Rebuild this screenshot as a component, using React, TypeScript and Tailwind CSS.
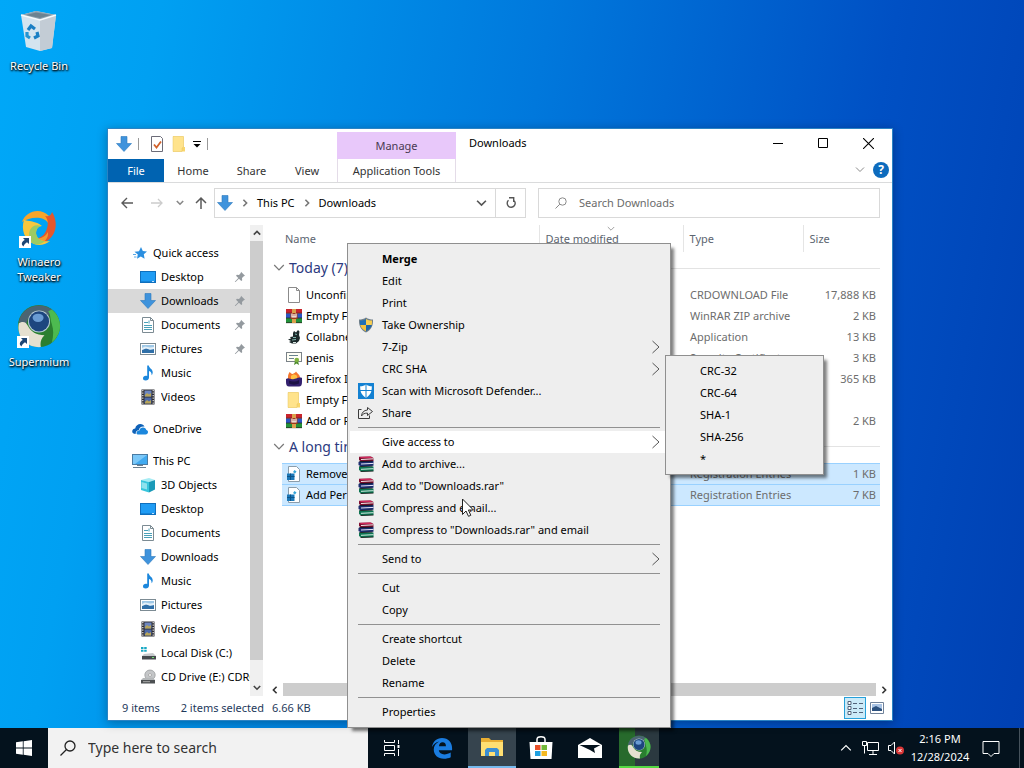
import type { ReactNode } from 'react';

type P = { className?: string };

const DownArrow = ({ className = 'size-4' }: P) => (
  <svg viewBox="0 0 16 16" className={className} aria-hidden="true">
    <path d="M5 .5h6v7h4.500L8 15.500.5 7.500H5z" fill="#3f93dc" stroke="#2c79bd" strokeWidth=".6" />
  </svg>
);
const Star = () => (
  <svg viewBox="0 0 16 16" className="size-4" aria-hidden="true">
    <path d="M9 2l1.800 4 4.200.5-3.200 2.800.8 4.500L8.800 11.500 5 13.800l.8-4.300L2.500 6.700 7 6.200z" fill="#2b8fe0" />
    <path d="M1 9.500h3M2 12h2.500" stroke="#58a9e8" />
  </svg>
);
const Monitor = () => (
  <svg viewBox="0 0 16 16" className="size-4" aria-hidden="true">
    <rect x=".5" y="2.500" width="15" height="11" fill="#1f9cf4" stroke="#0f6fbd" />
    <path d="M1 12.500h14" stroke="#1583d6" /><path d="M12 12.500h2" stroke="#bfe3ff" />
  </svg>
);
const Doc = () => (
  <svg viewBox="0 0 16 16" className="size-4" aria-hidden="true">
    <path d="M2.500.5h8l3 3v12h-11z" fill="#fff" stroke="#7c8b93" />
    <path d="M4 5.500h4M9 3.500v3M4 8.500h8M4 10.500h8M4 12.500h8" stroke="#4aa0b8" />
    <path d="M10.500.5v3h3" fill="none" stroke="#7c8b93" />
  </svg>
);
const Picture = () => (
  <svg viewBox="0 0 16 16" className="size-4" aria-hidden="true">
    <rect x=".5" y="2.500" width="15" height="11" fill="#fff" stroke="#7c8b93" />
    <path d="M2 4h12v8H2z" fill="#9fc8e6" /><path d="M2 9l4-2 4 2 4-1v4H2z" fill="#2f6fa8" />
    <path d="M2 7l3-1.500 5 1 4-.5v2l-4 .5-4-1L2 9z" fill="#e4f0f8" />
  </svg>
);
const Note = () => (
  <svg viewBox="0 0 16 16" className="size-4" aria-hidden="true">
    <path d="M7.200.5h1.600c.4 2.800 3.700 3.400 3.900 6.500.1 1.400-.5 2.600-1.100 3.300.2-2.300-.8-3.700-2.600-4.300v6.500c0 1.800-1.500 3-3.300 3S3 14.500 3 13.200s1.300-2.400 2.800-2.400c.5 0 1 .1 1.400.3z" fill="#1c87dc" />
  </svg>
);
const Film = () => (
  <svg viewBox="0 0 16 16" className="size-4" aria-hidden="true">
    <path d="M1.500.5h13v15h-13z" fill="#2d2d33" />
    <path d="M2.800 1v14M13.200 1v14" stroke="#e8e8e8" strokeWidth="1.200" strokeDasharray="1.300 1.200" />
    <path d="M4.500 1.500h7v6h-7z" fill="#6d86c0" /><path d="M4.500 8.500h7v6h-7z" fill="#4c68a8" />
    <path d="M5 6l2-2 2 1.500L11 4v3.500H5zM5 13l2-2 2 1.500 2-1.500v3.500H5z" fill="#b8a558" />
  </svg>
);
const Cloud = () => (
  <svg viewBox="0 0 16 16" className="size-4" aria-hidden="true">
    <path d="M.2 10.500c0-2 1.500-3 3-3C3.700 4.500 6 3 8.300 3c2 0 3.500 1 4.200 2.700-3.500-.5-5.300 1.500-5.700 3.500-2 0-3.200 1.300-3.200 3.800C1.500 13 .2 12 .2 10.500z" fill="#0f62b8" />
    <path d="M4.500 12.200c0-1.700 1.300-2.700 2.900-2.600.3-2 1.800-3.200 3.600-3.200 1.700 0 3 1.100 3.300 2.700 1 .2 1.700 1 1.700 2 0 1.400-1 2.400-2.400 2.400H6.700c-1.300 0-2.200-.5-2.200-1.300z" fill="#1b87dd" />
  </svg>
);
const Pc = () => (
  <svg viewBox="0 0 16 16" className="size-4" aria-hidden="true">
    <rect x=".5" y="1.500" width="15" height="10" fill="#41aaf0" stroke="#4a7ba3" />
    <path d="M1 2h14L3 11H1z" fill="#7cc8f8" /><path d="M1 14.500h13M5 12.500h6" stroke="#6b7f8f" />
  </svg>
);
const Cube = () => (
  <svg viewBox="0 0 16 16" className="size-4" aria-hidden="true">
    <path d="M1 3l8-2 6 2-6 2z" fill="#a6ecf4" /><path d="M1 3l8 2v10.500L1 13z" fill="#38c5dc" />
    <path d="M9 5l6-2v9.500L9 15.500z" fill="#1a9ab8" /><path d="M1.500 5L7 6.500v6L1.500 11z" fill="#8fe2ee" />
  </svg>
);
const Disk = () => (
  <svg viewBox="0 0 16 16" className="size-4" aria-hidden="true">
    <path d="M1 2h2.500v2H1zM4.200 2h2.500v2H4.200zM1 4.700h2.500v2H1zM4.200 4.700h2.500v2H4.200z" fill="#19a9c4" />
    <path d="M4 9l9-1 3 3H2z" fill="#c6c9cc" /><path d="M2 11h14v3.500H2z" fill="#45494d" /><path d="M12 12.500h2" stroke="#6fe06f" />
  </svg>
);
const Cd = () => (
  <svg viewBox="0 0 16 16" className="size-4" aria-hidden="true">
    <ellipse cx="10" cy="6" rx="5.200" ry="5" fill="#c4c6c8" stroke="#929597" strokeWidth=".7" />
    <ellipse cx="10" cy="6" rx="1.500" ry="1.400" fill="#fff" stroke="#8a8a8a" strokeWidth=".6" />
    <path d="M3 9l10-.5 2 2.500H1z" fill="#b5b8ba" /><path d="M1 11h14v3.500H1z" fill="#4d5052" /><path d="M3 12.700h7" stroke="#aaa" />
  </svg>
);
const Pin = () => (
  <svg viewBox="0 0 12 12" className="size-3" aria-hidden="true">
    <path d="M7 .8l4 4-1.200.4L8 7l.2 2.200-.9.9L4.900 7.700 1.500 11l-.6.1.1-.6 3.300-3.400L2 4.700l.9-.9L5 4l1.800-1.900z" fill="#949a9f" />
  </svg>
);
const Chevron = ({ className = '', d = 'M1 2.500l4 4 4-4' }: { className?: string; d?: string }) => (
  <svg viewBox="0 0 10 10" fill="none" stroke="currentColor" className={className} aria-hidden="true"><path d={d} /></svg>
);
const RIGHT = 'M3 1l4 4-4 4';
const UP = 'M1 7l4-4 4 4';

const Page = () => (
  <svg viewBox="0 0 16 16" className="size-4" aria-hidden="true">
    <path d="M2.500.5h8l3 3v12h-11z" fill="#fff" stroke="#8b8b8b" /><path d="M10.500.5v3h3" fill="none" stroke="#8b8b8b" />
  </svg>
);
const Zip = () => (
  <svg viewBox="0 0 16 16" className="size-4" aria-hidden="true">
    <path d="M0 1h16v4.500H0z" fill="#c8242c" /><path d="M0 5.500h16v4.500H0z" fill="#2c55c4" /><path d="M0 10h16v5H0z" fill="#23913a" />
    <path d="M0 5.200h16M0 10h16M0 14.700h16" stroke="#2a2020" strokeWidth=".7" />
    <path d="M6 1h4v4H6zM6 11h4v4H6z" fill="#dba04c" /><path d="M4.500 5h7v6h-7z" fill="#9c3a1c" /><path d="M6 5.500V9h4V5.500M8 6v3" fill="none" stroke="#fff" strokeWidth="1.200" />
  </svg>
);
const Collab = () => (
  <svg viewBox="0 0 16 16" className="size-4" aria-hidden="true">
    <path d="M7 4l1-2 2 1.500L12 1l1.500 1.500L13 6l1 3-1 3-3 2.500H6L3 13l2-1-3-1.500 3-1L4 8l3-.500z" fill="#1c2a2b" />
    <path d="M9 5l2 .5M7 8.500h3M6 11l4-.5" stroke="#7fb3ac" /><path d="M7 13.500h3" stroke="#d9e8e4" />
  </svg>
);
const Cert = () => (
  <svg viewBox="0 0 16 16" className="size-4" aria-hidden="true">
    <rect x=".5" y="2.500" width="15" height="9" fill="#fffef5" stroke="#7a8288" />
    <path d="M3 5.500h9M3 8.500h5" stroke="#68838f" />
    <path d="M9 11l-1 4 2.500-1.500L13 15l-1-4z" fill="#4d8a2d" /><circle cx="10.800" cy="10" r="2.300" fill="#7eb23f" />
  </svg>
);
const Firefox = () => (
  <svg viewBox="0 0 16 16" className="size-4" aria-hidden="true">
    <path d="M2 6c0-3 1-3.500 1.500-5C5 2 5.500 3 6.500 3 8 2 9 2 10 .5c1 1.500 3.500 3 4 5.500v4H2z" fill="#f4762c" />
    <path d="M5 5c1.500-2 4.500-2 6 0v4H5z" fill="#fdc043" />
    <path d="M0 8c3-2 4 1 8 0s6-2 8-1v4c0 3-1 4.500-3 4.500H3C1 15.500 0 14 0 11z" fill="#33206e" /><path d="M3 9.500c3 1.500 7 1.500 10-.5v3.500c-3 1.500-7 1.500-10 0z" fill="#1d1245" />
  </svg>
);
const Folder = ({ className = 'size-4' }: P) => (
  <svg viewBox="0 0 16 16" className={className} aria-hidden="true">
    <path d="M2 .5h10.500V11H14v4.500H2z" fill="#f9d66c" /><path d="M2 .5h10.500V11l-1.500 1v3.500H2z" fill="#ffe38c" stroke="#e7c562" strokeWidth=".5" />
  </svg>
);
const Reg = () => (
  <svg viewBox="0 0 16 16" className="size-4" aria-hidden="true">
    <path d="M2.500.5h8l3 3v12h-11z" fill="#fff" stroke="#8b9dab" />
    <path d="M1 7.500h7.500V14H1z" fill="#1c78b8" /><path d="M1 10.500h7.500M4.500 7.500V14" stroke="#0d5488" />
    <path d="M8.500 4l2 1.500-1.500 2-2-1.500z" fill="#35a5d8" />
  </svg>
);

const Shield = () => (
  <svg viewBox="0 0 16 16" className="size-4" aria-hidden="true">
    <path d="M8 .5C10 2 12.500 2.500 15 2.500c.3 6-1.500 10.500-7 13-5.500-2.500-7.300-7-7-13C3.500 2.500 6 2 8 .5z" fill="#6f7f8a" />
    <path d="M8 2v6H2.100C2 6.500 1.900 5 2 3.600 4.200 3.500 6.300 3 8 2z" fill="#2170b4" /><path d="M8 2c1.700 1 3.800 1.500 6 1.600.1 1.400 0 2.900-.3 4.400H8z" fill="#f7cd4f" />
    <path d="M2.300 8H8v6.300C4.700 12.800 2.900 10.700 2.300 8z" fill="#f4c33d" /><path d="M8 8h5.700c-.6 2.700-2.400 4.800-5.700 6.300z" fill="#1d66a8" />
  </svg>
);
const Defender = () => (
  <svg viewBox="0 0 16 16" className="size-4" aria-hidden="true">
    <path d="M0 0h16v16H0z" fill="#1381d2" />
    <path d="M8 1.500c1.500 1.200 3.500 1.700 5.800 1.800.2 5-1.200 9-5.800 11.400C3.400 12.300 2 8.300 2.200 3.300 4.500 3.200 6.500 2.700 8 1.500z" fill="#fff" />
    <path d="M8 1.500v13M2 7.500h12" stroke="#1381d2" />
  </svg>
);
const Share = () => (
  <svg viewBox="0 0 16 16" className="size-4" fill="none" stroke="#3c3c3c" aria-hidden="true">
    <path d="M3.500 4.500h-3v9h11v-3M9.500 2.500l5 4-5 4v-2.400c-3 0-4.800.8-6 2.900.3-3.500 2.300-5.700 6-6z" />
  </svg>
);
const Books = () => (
  <svg viewBox="0 0 16 16" className="size-4" aria-hidden="true">
    <path d="M1 .8l12-.3L15.500 2v3L3 5.500 1 4z" fill="#7d1030" /><path d="M1 1l11-.5L15 2H3.500z" fill="#d0285c" />
    <path d="M3 3.500l12.500-.7" stroke="#f5e8e8" /><path d="M.5 6l2-1h13v4.800L3 10.500.5 9z" fill="#1c2d70" /><path d="M3 8l12.500-.6" stroke="#e6e6f4" />
    <path d="M1 10.500h14.500V15l-12 .7L1 14z" fill="#0c7552" /><path d="M3 13.300l12.500-.6" stroke="#d5ede3" />
    <path d="M1.500 5.700l13-.6M1.500 10.600l13-.5M2.500 15.500l13-.4" stroke="#111" strokeWidth=".8" />
  </svg>
);

const RecycleBin = () => (
  <svg viewBox="0 0 40 44" className="h-11 w-10" aria-hidden="true">
    <path d="M2 7l15-4 20 4-4 33-12 3L7 39z" fill="#dfe7ee" opacity=".95" />
    <path d="M2 7l15-4 20 4-16 5z" fill="#8fa3b0" /><path d="M7 7l10-2.500L32 7l-11 3z" fill="#6c8391" />
    <path d="M21 12l16-5-4 33-12 3z" fill="#c3ccd5" /><path d="M2 7l19 5 16-5" fill="none" stroke="#f6fafc" strokeWidth="1.500" />
    <g fill="none" stroke="#1a7fc4" strokeWidth="3.200"><path d="M9 22l3-4 4 3" /><path d="M18 24l1 4-4 2" /><path d="M11 30l-3-2 0-4" stroke="#2394d2" /></g>
  </svg>
);
const Shortcut = () => (
  <svg viewBox="0 0 12 12" className="absolute bottom-0 left-0 size-3" aria-hidden="true">
    <path d="M0 0h12v12H0z" fill="#fff" /><path d="M4 2h6v6L8 6.200C6 7.500 5 8.500 4.500 10.500 1.500 8 3 5.500 5.800 4z" fill="#1d4675" />
  </svg>
);
const Winaero = () => (
  <svg viewBox="0 0 40 40" className="size-10" aria-hidden="true">
    <path d="M3 14C7 3 21-1 30 8c5 5 5 12 1 17 1-8-3-14-10-15C14 9 8 11 3 14z" fill="#f6a52b" />
    <path d="M33 4c7 11 4 25-7 30-7 3-14 0-17-4 8 2 15 0 18-7 3-7 2-12-1-15 3 1 6 0 7-4z" fill="#e4572c" />
    <path d="M12 30c7 2 14 0 17-6 1 7-5 12-11 12-3 0-5-3-6-6z" fill="#f59a2e" />
    <path d="M5 12c-3 9 0 20 10 24 5 2 11 1 16-3-7 1-13-1-14-7 0-5 2-8 6-8-6-5-14-5-18-6z" fill="#f7c73e" />
    <path d="M15 36c-5-3-6-10-4-14s6-6 11-4c-5 2-6 6-4 10 1 3 4 5 8 5-3 3-7 4-11 3z" fill="#9ccb62" />
  </svg>
);
const Supermium = ({ className }: P) => (
  <svg viewBox="0 0 48 48" className={className} aria-hidden="true">
    <circle cx="24" cy="24" r="23" fill="#2a7f30" />
    <path d="M2 20C4 4 24-4 38 6L34 14 22 8 12 16 10 22z" fill="#4b6472" />
    <path d="M38 6c6 5 9 11 9 18 0 8-4 14-9 18 2-8 2-14 0-20s-1-10-4-14z" fill="#4dba50" />
    <path d="M2 21c5-3 8-1 10 3 3 6 9 10 18 10-4 4-5 8-4 13C11 48-1 36 2 21z" fill="#e5e0d0" />
    <circle cx="24" cy="19" r="12" fill="#b9cdd8" /><circle cx="24" cy="19" r="11" fill="#1d467f" /><ellipse cx="23" cy="15" rx="6" ry="4.500" fill="#6a9cd4" />
  </svg>
);

const quick: { label: string; icon: ReactNode; pinned?: boolean; active?: boolean }[] = [
  { label: 'Desktop', icon: <Monitor />, pinned: true },
  { label: 'Downloads', icon: <DownArrow />, pinned: true, active: true },
  { label: 'Documents', icon: <Doc />, pinned: true },
  { label: 'Pictures', icon: <Picture />, pinned: true },
  { label: 'Music', icon: <Note /> },
  { label: 'Videos', icon: <Film /> },
];
const pc: typeof quick = [
  { label: '3D Objects', icon: <Cube /> },
  { label: 'Desktop', icon: <Monitor /> },
  { label: 'Documents', icon: <Doc /> },
  { label: 'Downloads', icon: <DownArrow /> },
  { label: 'Music', icon: <Note /> },
  { label: 'Pictures', icon: <Picture /> },
  { label: 'Videos', icon: <Film /> },
  { label: 'Local Disk (C:)', icon: <Disk /> },
  { label: 'CD Drive (E:) CDROM', icon: <Cd /> },
];

const NavRow = ({ label, icon, pinned, active, root }: { label: string; icon: ReactNode; pinned?: boolean; active?: boolean; root?: boolean }) => (
  <button className={`flex h-6 w-full items-center gap-[5px] overflow-hidden whitespace-nowrap ${root ? 'pl-6' : 'pl-8'} ${pinned ? 'pr-1' : ''} ${active ? 'bg-[#d9d9d9]' : ''}`}>
    <span className="shrink-0">{icon}</span>
    <span className="flex-1 overflow-hidden text-left">{label}</span>
    {pinned && <Pin />}
  </button>
);

type File = { name: string; icon: ReactNode; type?: string; size?: string };
const groups: { title: string; selected?: boolean; files: File[] }[] = [
  {
    title: 'Today (7)',
    files: [
      { name: 'Unconfirmed', icon: <Page />, type: 'CRDOWNLOAD File', size: '17,888 KB' },
      { name: 'Empty File', icon: <Zip />, type: 'WinRAR ZIP archive', size: '2 KB' },
      { name: 'Collabnet', icon: <Collab />, type: 'Application', size: '13 KB' },
      { name: 'penis', icon: <Cert />, type: 'Security Certificate', size: '3 KB' },
      { name: 'Firefox Installer', icon: <Firefox />, size: '365 KB' },
      { name: 'Empty File', icon: <Folder /> },
      { name: 'Add or Remove', icon: <Zip />, size: '2 KB' },
    ],
  },
  {
    title: 'A long time ago (2)',
    selected: true,
    files: [
      { name: 'Remove', icon: <Reg />, type: 'Registration Entries', size: '1 KB' },
      { name: 'Add Permissions', icon: <Reg />, type: 'Registration Entries', size: '7 KB' },
    ],
  },
];

type Item = { label: string; icon?: ReactNode; more?: boolean; bold?: boolean; hot?: boolean };
const menu: Item[][] = [
  [
    { label: 'Merge', bold: true },
    { label: 'Edit' },
    { label: 'Print' },
    { label: 'Take Ownership', icon: <Shield /> },
    { label: '7-Zip', more: true },
    { label: 'CRC SHA', more: true },
    { label: 'Scan with Microsoft Defender...', icon: <Defender /> },
    { label: 'Share', icon: <Share /> },
  ],
  [
    { label: 'Give access to', more: true, hot: true },
    { label: 'Add to archive...', icon: <Books /> },
    { label: 'Add to "Downloads.rar"', icon: <Books /> },
    { label: 'Compress and email...', icon: <Books /> },
    { label: 'Compress to "Downloads.rar" and email', icon: <Books /> },
  ],
  [{ label: 'Send to', more: true }],
  [{ label: 'Cut' }, { label: 'Copy' }],
  [{ label: 'Create shortcut' }, { label: 'Delete' }, { label: 'Rename' }],
  [{ label: 'Properties' }],
];

const DesktopIcon = ({ label, children }: { label: string; children: ReactNode }) => (
  <button className="flex w-[78px] flex-col items-center gap-1.5 text-center leading-[15px] text-white [text-shadow:1px_1px_2px_#000,0_1px_2px_#000]">
    {children}
    <span className="w-16">{label}</span>
  </button>
);

const Titlebar = () => (
  <header className="flex h-[54px] items-stretch border-b border-[#dadbdc]">
    <div className="flex w-[229px] flex-col">
      <div className="flex h-[30px] items-center gap-1.5 pl-2">
        <DownArrow />
        <span className="h-3 w-px bg-[#999]" />
        <button aria-label="Properties" className="ml-1">
          <svg viewBox="0 0 16 16" className="size-4" aria-hidden="true">
            <path d="M2.500.5h9l2 2v13h-11z" fill="#fff" stroke="#6c6c78" /><path d="M5 8.500l2.500 3L12 5.500" fill="none" stroke="#d1622c" strokeWidth="1.800" />
          </svg>
        </button>
        <button aria-label="New folder"><Folder /></button>
        <button aria-label="Customize toolbar">
          <svg viewBox="0 0 8 8" className="size-2" aria-hidden="true"><path d="M0 1.500h8" stroke="#000" /><path d="M.5 4h7L4 7.500z" /></svg>
        </button>
        <span className="h-3 w-px bg-[#999]" />
      </div>
      <div className="flex h-[23px]">
        <button className="w-14 bg-[#0063b1] text-white">File</button>
        <button className="w-[58px] text-[#333]">Home</button>
        <button className="w-[59px] text-[#333]">Share</button>
        <button className="w-[52px] text-[#333]">View</button>
      </div>
    </div>
    <div className="mt-[3px] flex w-[119px] flex-col">
      <span className="flex h-[27px] items-center justify-center bg-[#e8c8fa] text-[#493a52]">Manage</span>
      <button className="flex-1 border-x border-[#e4dce8] text-[#333]">Application Tools</button>
    </div>
    <h1 className="flex h-7 flex-1 items-center pl-[13px]">Downloads</h1>
    <div className="flex flex-col">
      <div className="flex h-7">
        <button aria-label="Minimize" className="flex w-[45px] items-center justify-center"><svg viewBox="0 0 10 10" className="size-[10px]" stroke="#000"><path d="M0 5.500h10" /></svg></button>
        <button aria-label="Maximize" className="flex w-[45px] items-center justify-center"><svg viewBox="0 0 10 10" className="size-[10px]" fill="none" stroke="#000"><path d="M.5.5h9v9h-9z" /></svg></button>
        <button aria-label="Close" className="flex w-[47px] items-center justify-center"><svg viewBox="0 0 10 10" className="size-[11px]" fill="none" stroke="#000"><path d="M0 0l10 10M10 0L0 10" /></svg></button>
      </div>
      <div className="flex flex-1 items-center justify-end gap-2 pr-[3px]">
        <button aria-label="Expand ribbon"><Chevron className="size-[10px] text-[#8a8a8a]" /></button>
        <button aria-label="Help" className="size-4 rounded-full bg-[#0d6bbd] text-xs leading-4 font-bold text-white">?</button>
      </div>
    </div>
  </header>
);

const AddressBar = () => (
  <div className="flex h-10 items-center pr-3 pl-3 text-[#555]">
    <button aria-label="Back" className="w-[14px]"><svg viewBox="0 0 14 14" className="size-[14px]" fill="none" stroke="#5a5a5a" strokeWidth="1.400"><path d="M13 7H2M7 2L2 7l5 5" /></svg></button>
    <button aria-label="Forward" className="ml-4 w-[14px]"><svg viewBox="0 0 14 14" className="size-[14px]" fill="none" stroke="#ccc" strokeWidth="1.300"><path d="M1 7h11M8 3l4 4-4 4" /></svg></button>
    <button aria-label="Recent locations" className="ml-3"><Chevron className="size-2 stroke-2 text-[#888]" /></button>
    <button aria-label="Up" className="ml-2.5 w-[14px]"><svg viewBox="0 0 14 14" className="size-[14px]" fill="none" stroke="#5a5a5a" strokeWidth="1.500"><path d="M7 13V2M2 7l5-5 5 5" /></svg></button>
    <div className="ml-1.5 flex h-[30px] w-[312px] shrink-0 items-center border border-[#d9d9d9] pl-0.5">
      <DownArrow />
      <Chevron className="ml-2 size-2 stroke-2 text-[#777]" d={RIGHT} />
      <a href="#pc" className="ml-2 text-black">This PC</a>
      <Chevron className="ml-2 size-2 stroke-2 text-[#777]" d={RIGHT} />
      <a href="#downloads" className="ml-2 flex-1 text-black">Downloads</a>
      <button aria-label="Previous locations" className="px-2"><Chevron className="size-[11px] stroke-[1.5]" /></button>
      <button aria-label="Refresh" className="flex h-full w-[30px] items-center justify-center border-l border-[#d9d9d9]">
        <svg viewBox="0 0 12 12" className="size-3" fill="none" stroke="#555" strokeWidth="1.400"><path d="M3.500 3.300A4 4 0 1 0 8.500 3M4 .7h4.700V5" /></svg>
      </button>
    </div>
    <label className="ml-3 flex h-[30px] flex-1 items-center gap-3 border border-[#d9d9d9] pl-4">
      <svg viewBox="0 0 12 12" className="size-3" fill="none" stroke="#8a8a8a"><circle cx="7.500" cy="4.500" r="3.700" /><path d="M4.800 7.200L.5 11.500" /></svg>
      <input aria-label="Search Downloads" placeholder="Search Downloads" className="min-w-0 flex-1 outline-none placeholder:text-[#6b6b6b]" />
    </label>
  </div>
);

const ExplorerWindow = () => (
  <section className="absolute top-32 left-[107px] flex h-[593px] w-[786px] flex-col border border-[#2a83c4] bg-white shadow-[0_2px_10px_rgba(0,0,0,0.3)]">
    <Titlebar />
    <AddressBar />
    <div className="flex min-h-0 flex-1 pt-0.5">
      <nav className="flex w-[142px] flex-col overflow-hidden pt-4">
        <NavRow label="Quick access" icon={<Star />} root />
        {quick.map((r) => <NavRow key={r.label} {...r} />)}
        <div className="pt-2"><NavRow label="OneDrive" icon={<Cloud />} root /></div>
        <div className="pt-2"><NavRow label="This PC" icon={<Pc />} root /></div>
        {pc.map((r) => <NavRow key={r.label} {...r} />)}
      </nav>
      <div className="flex w-[13px] flex-col items-center bg-[#f0f0f0] text-[#444]">
        <Chevron className="my-1 size-2 stroke-2" d={UP} />
        <span className="w-full flex-1 bg-[#cdcdcd]" />
        <Chevron className="mt-6 mb-1 size-2 stroke-2" />
      </div>
      <div className="flex min-w-0 flex-1 flex-col">
        <div className="flex-1 pl-2">
          <table className="w-full table-fixed border-collapse text-left">
            <colgroup>
              <col className="w-[11px]" /><col className="w-[257px]" /><col className="w-36" /><col className="w-[120px]" /><col className="w-[77px]" /><col />
            </colgroup>
            <thead className="text-[#5c6570]">
              <tr className="h-[27px] [&>th]:font-normal">
                <th />
                <th className="border-r border-[#e5e5e5] pl-[3px]">Name</th>
                <th className="relative border-r border-[#e5e5e5] pl-1.5">
                  <Chevron className="absolute top-0 left-[67px] size-2 text-[#888]" />Date modified
                </th>
                <th className="border-r border-[#e5e5e5] pl-1.5">Type</th>
                <th className="pl-1.5">Size</th>
                <th />
              </tr>
            </thead>
            {groups.map((g) => (
              <tbody key={g.title}>
                <tr className="h-8">
                  <th colSpan={6} className="text-sm leading-5 font-normal text-[#2c3a80]">
                    <div className="flex items-center gap-1 pl-0.5">
                      <Chevron className="size-3 text-[#777]" />{g.title}<span className="mr-3 h-px flex-1 bg-[#e3e3e3]" />
                    </div>
                  </th>
                </tr>
                {g.files.map((f, i) => (
                  <tr key={i} className="h-[21px] whitespace-nowrap text-[#6d6d6d]">
                    <td />
                    <td className={g.selected ? 'border-y border-[#99d1ff] bg-[#cce8ff]' : ''}>
                      <span className="flex items-center gap-1 pl-1 text-black">{f.icon}{f.name}</span>
                    </td>
                    <td className={g.selected ? 'border-y border-[#99d1ff] bg-[#cce8ff]' : ''} />
                    <td className={`overflow-hidden pl-[7px] ${g.selected ? 'border-y border-[#99d1ff] bg-[#cce8ff]' : ''}`}>{f.type}</td>
                    <td className={`pr-1 text-right ${g.selected ? 'border-y border-[#99d1ff] bg-[#cce8ff]' : ''}`}>{f.size}</td>
                    <td />
                  </tr>
                ))}
              </tbody>
            ))}
          </table>
        </div>
        <div className="flex h-[13px] items-center gap-1 pr-1 pl-2 text-[#333]">
          <Chevron className="size-2 stroke-2" d="M7 1L3 5l4 4" />
          <span className="h-full flex-1 bg-[#cdcdcd]" />
          <Chevron className="size-2 stroke-2" d={RIGHT} />
        </div>
      </div>
    </div>
    <footer className="flex h-6 items-center pr-2 pl-3.5 text-[#1e395b]">
      <span>9 items</span>
      <span className="ml-[21px]">2 items selected</span>
      <span className="ml-2 flex-1">6.66 KB</span>
      <button aria-label="Details view" className="flex h-[22px] w-[22px] items-center justify-center border border-[#26a0da] bg-[#cbeaf8]">
        <svg viewBox="0 0 16 14" className="h-3.5 w-4" stroke="#51627a" strokeWidth="1" fill="none">
          <path d="M1 .5h3v3H1zM1 5.500h3v3H1zM1 10.500h3v3H1z" fill="#fff" /><path d="M6 2.500h4M6 7.500h4M6 11.500h4M12 2.500h4M12 7.500h4M12 11.500h4" />
        </svg>
      </button>
      <button aria-label="Thumbnail view" className="ml-1">
        <svg viewBox="0 0 14 12" className="h-3 w-3.5"><path d="M.5.500h13v11H.5z" fill="#fff" stroke="#70829a" /><path d="M2 2h10v7H2z" fill="#a9c3e4" /><path d="M2 6l4-2 6 3v2H2z" fill="#2c517e" /></svg>
      </button>
    </footer>
  </section>
);

const ContextMenu = () => (
  <div role="menu" className="absolute top-[243px] left-[347px] z-10 w-[324px] border border-[#8f8f8f] bg-[#eeeeee] px-0.5 py-1 shadow-[4px_4px_3px_-1px_rgba(0,0,0,0.5)]">
    {menu.map((items, i) => (
      <div key={i} role="group">
        {i > 0 && <div className="mx-2 my-[3px] h-px bg-[#919191]" />}
        {items.map((it) => (
          <button key={it.label} role="menuitem" className={`flex h-[22px] w-full items-center pr-2 pl-2 text-left ${it.hot ? 'bg-white' : ''} ${it.bold ? 'font-bold' : ''}`}>
            <span className="w-6 shrink-0">{it.icon}</span>
            <span className="flex-1">{it.label}</span>
            {it.more && <svg viewBox="0 0 8 14" className="h-3.5 w-2" fill="none" stroke="#555"><path d="M.5 1l6.500 6-6.500 6" /></svg>}
          </button>
        ))}
      </div>
    ))}
  </div>
);

const SubMenu = () => (
  <div role="menu" className="absolute top-[355px] left-[665px] z-20 w-[159px] border border-[#8f8f8f] bg-[#eeeeee] px-0.5 py-1 shadow-[4px_4px_3px_-1px_rgba(0,0,0,0.5)]">
    {['CRC-32', 'CRC-64', 'SHA-1', 'SHA-256', '*'].map((t) => (
      <button key={t} role="menuitem" className="flex h-[22px] w-full items-center pl-8">{t}</button>
    ))}
  </div>
);

const Cursor = () => (
  <svg viewBox="0 0 12 19" className="absolute top-[498px] left-[462px] z-30 h-[19px] w-3" aria-hidden="true">
    <path d="M.5 1v15.500L4 13l2.500 5.300 2.300-1L6.400 12h5z" fill="#fff" stroke="#222" />
  </svg>
);

const Taskbar = () => (
  <footer className="flex h-10 items-stretch bg-[#04121d] text-white">
    <button aria-label="Start" className="flex w-12 items-center justify-center">
      <svg viewBox="0 0 16 16" className="size-4" fill="#fff"><path d="M0 2.300l6.800-1v6.300H0zM7.600 1.200L16 0v7.600H7.600zM0 8.400h6.800v6.300l-6.800-1zM7.600 8.400H16V16l-8.400-1.200z" /></svg>
    </button>
    <label className="flex w-80 items-center gap-3 bg-[#f2f2f2] pl-3">
      <svg viewBox="0 0 16 16" className="size-4" fill="none" stroke="#222" strokeWidth="1.300"><circle cx="10" cy="6" r="5" /><path d="M6.500 9.500L.5 15.500" /></svg>
      <input aria-label="Type here to search" placeholder="Type here to search" className="w-60 text-sm outline-none placeholder:text-[#333]" />
    </label>
    <button aria-label="Task view" className="flex w-12 items-center justify-center">
      <svg viewBox="0 0 18 16" className="h-4 w-[18px]" fill="none" stroke="#fff"><path d="M1.500 0v2.500h10V0M1.500 5.500h10v5h-10zM1.500 16v-2.500h10V16M15.500 0v4M15.500 9v7" /><path d="M14.500 5h2v3h-2z" fill="#fff" stroke="none" /></svg>
    </button>
    <button aria-label="Edge" className="flex w-[52px] items-center justify-center">
      <svg viewBox="0 0 24 24" className="size-[22px]"><path d="M1 11C2 5 6 1 12 1c7 0 11 5 11 11v2.500H8.500c.3 3 3 4.500 6 4.500 2.500 0 5-.7 7-2v5c-2 1-4.600 1.700-7.500 1.700-6.500 0-11-4-11-10 0-4 2.200-7 6-8.700-4 .5-6 3-8 6zM8.700 10h7.600c0-2.600-1.200-4.200-3.700-4.200-2.200 0-3.600 1.700-3.900 4.200z" fill="#1a7ce0" /></svg>
    </button>
    <button aria-label="File Explorer" className="flex w-12 items-center justify-center border-b-2 border-[#76b9ed] bg-[#36444e]">
      <svg viewBox="0 0 22 20" className="h-5 w-[22px]"><path d="M0 1h8l2 2h12v16H0z" fill="#e9ae32" /><path d="M0 5h22v14H0z" fill="#ffdf72" /><path d="M4 19v-6l2-2h10l2 2v6h-4v-4H8v4z" fill="#3d8fd2" /></svg>
    </button>
    <button aria-label="Store" className="flex w-[49px] items-center justify-center">
      <svg viewBox="0 0 24 24" className="size-6"><path d="M8 6V3.500C8 1.500 9.500.8 12 .8s4 .7 4 2.700V6" fill="none" stroke="#fff" strokeWidth="1.500" /><path d="M.5 6h23l-1 17H1.500z" fill="#fff" /><path d="M6 9h5.500v5H6z" fill="#e8502a" /><path d="M12.500 9H18v5h-5.500z" fill="#72b83a" /><path d="M6 15h5.500v5H6z" fill="#20a0e0" /><path d="M12.500 15H18v5h-5.500z" fill="#f5b921" /></svg>
    </button>
    <button aria-label="Mail" className="flex w-[50px] items-center justify-center">
      <svg viewBox="0 0 24 20" className="h-5 w-6"><path d="M0 7l12-7 12 7v13H0z" fill="#fff" /><path d="M1.500 7h21L16 10.500l1 4.500-5-3z" fill="#04121d" /></svg>
    </button>
    <button aria-label="Supermium" className="ml-1 flex w-10 items-center justify-center border-b-2 border-[#55d843] bg-gradient-to-r from-[#276a2c] from-40% to-[#2b3940] to-40%"><Supermium className="size-6" /></button>
    <div className="ml-auto flex items-center pr-1">
      <button aria-label="Show hidden icons" className="w-3"><Chevron className="size-3" d={UP} /></button>
      <svg viewBox="0 0 18 16" className="ml-2.5 h-4 w-[18px]" fill="none" stroke="#fff" role="img" aria-label="Network"><path d="M5.500 2.500h11v8h-11zM7 14.500h8M11 10.500v4M.5 1.500h4v4h-4zM2.500 5.500v8" /></svg>
      <svg viewBox="0 0 16 14" className="ml-2 h-3.5 w-4" role="img" aria-label="Muted"><path d="M.5 4.500H3L6.500 1v12L3 9.500H.5z" fill="none" stroke="#fff" /><circle cx="12" cy="9.500" r="4" fill="#d93636" /><path d="M10.500 8l3 3M13.500 8l-3 3" stroke="#fff" /></svg>
      <time className="w-[72px] text-center leading-[18px]"><span className="block">2:16 PM</span><span className="block">12/28/2024</span></time>
      <button aria-label="Notifications" className="mr-[19px] pl-1.5">
        <svg viewBox="0 0 18 17" className="h-[17px] w-[18px]" fill="none" stroke="#fff"><path d="M1 1.500h16v12h-5l-3 3-3-3H1z" /></svg>
      </button>
      <span className="h-10 w-px bg-[#46525c]" />
    </div>
  </footer>
);

export default function App() {
  return (
    <div className="flex min-h-screen flex-col overflow-hidden font-['Noto_Sans','Open_Sans',sans-serif] text-[11px] leading-4 text-black">
      <main className="relative flex-1 bg-[linear-gradient(100deg,#00a8f8_0%,#00a0f2_14%,#0078dc_48%,#0050c4_78%,#0040b2_100%)]">
        <div className="flex flex-col gap-[135px] pt-2">
          <DesktopIcon label="Recycle Bin"><RecycleBin /></DesktopIcon>
          <div className="flex flex-col gap-5">
            <DesktopIcon label="Winaero Tweaker"><span className="relative"><Winaero /><Shortcut /></span></DesktopIcon>
            <DesktopIcon label="Supermium"><span className="relative"><Supermium className="size-11" /><Shortcut /></span></DesktopIcon>
          </div>
        </div>
        <ExplorerWindow />
        <ContextMenu />
        <SubMenu />
        <Cursor />
      </main>
      <Taskbar />
    </div>
  );
}
